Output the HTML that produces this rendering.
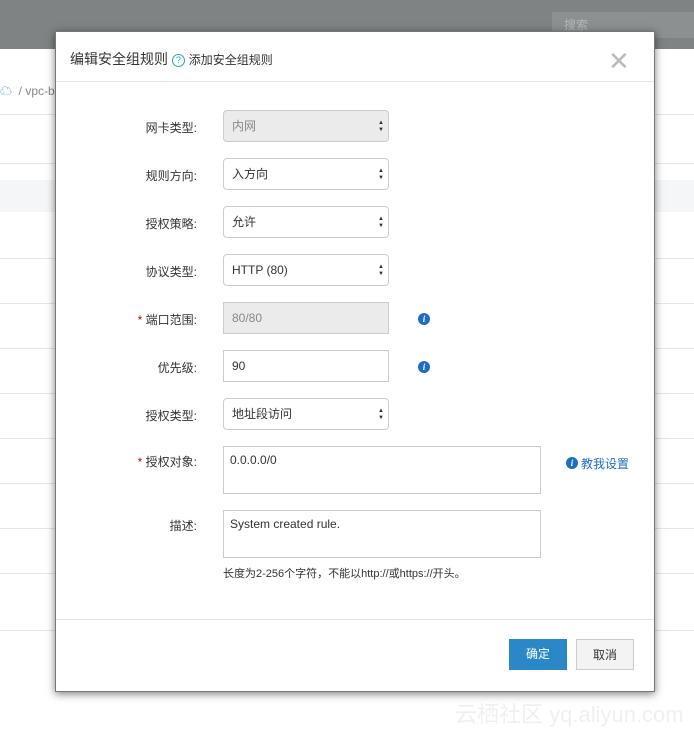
<!DOCTYPE html>
<html><head><meta charset="utf-8"><style>
body{margin:0;width:694px;height:733px;position:relative;overflow:hidden;background:#fff;font-family:"Liberation Sans","Noto Sans CJK SC",sans-serif;}
.top{position:absolute;left:0;top:0;width:694px;height:49px;background:#7f8383}
.search{position:absolute;left:552px;top:12px;width:142px;height:26px;background:#8c9090;color:#b6b9b9;font-size:12px;line-height:26px;padding-left:12px;box-sizing:border-box}
.hl{position:absolute;left:0;width:694px;height:1px;background:#e6e6e6}
.crumb{position:absolute;left:0;top:82px;font-size:12px;color:#888}
.modal{position:absolute;left:55px;top:31px;width:598px;height:659px;background:#fff;border:1px solid #777;box-shadow:0 2px 8px rgba(0,0,0,.5)}
.title{position:absolute;left:14px;top:17px;font-size:14px;color:#333}
.title small{font-size:12px}
.q{display:inline-block;width:11px;height:11px;border:1px solid #2aa;border-radius:50%;font-size:9px;line-height:11px;text-align:center;color:#2aa;vertical-align:1px}
.close{position:absolute;left:552px;top:14px;font-size:26px;color:#bbb;font-weight:300}
.sep{position:absolute;left:0;width:598px;height:1px;background:#e3e3e3}
.lab{position:absolute;width:141px;text-align:right;font-size:12px;color:#333}
.lab b{color:#c00;font-weight:normal}
.in{position:absolute;left:167px;font-size:12px;color:#333;line-height:30px;padding-left:8px;box-sizing:border-box;width:166px;height:32px;border:1px solid #ccc}
.sel{border-radius:4px}
.sel:after{content:"▲\A▼";white-space:pre;position:absolute;right:4px;top:9px;font-size:6px;line-height:7px;color:#333}
.dis{background:#ebebeb;color:#888}
.info{position:absolute;width:12px;height:12px;border-radius:50%;background:#1e6fc4;color:#fff;font-size:9px;font-style:italic;font-weight:bold;text-align:center;line-height:12px;font-family:"Liberation Serif",serif}
.btn{position:absolute;top:607px;height:31px;width:58px;font-size:12px;text-align:center;line-height:31px;box-sizing:border-box}
</style></head><body>
<div class="top"><div class="search">搜索</div></div>
<div class="crumb"><span style="color:#39c">☁</span>&nbsp; / vpc-b</div>
<div class="hl" style="top:114px"></div>
<div class="hl" style="top:163px"></div>
<div class="hl" style="top:180px;height:32px;background:#f4f6f8"></div>
<div class="hl" style="top:258px"></div>
<div class="hl" style="top:303px"></div>
<div class="hl" style="top:348px"></div>
<div class="hl" style="top:393px"></div>
<div class="hl" style="top:438px"></div>
<div class="hl" style="top:483px"></div>
<div class="hl" style="top:528px"></div>
<div class="hl" style="top:573px"></div>
<div class="hl" style="top:630px"></div>
<div style="position:absolute;left:455px;top:697px;font-size:22px;color:#f0f0f0;white-space:nowrap">云栖社区 yq.aliyun.com</div>
<div class="modal">
<div class="title">编辑安全组规则 <span class="q">?</span> <small>添加安全组规则</small></div>
<div class="close">✕</div>
<div class="sep" style="top:49px"></div>
<div class="lab" style="top:87px">网卡类型:</div><div class="in sel dis" style="top:78px">内网</div>
<div class="lab" style="top:135px">规则方向:</div><div class="in sel" style="top:126px">入方向</div>
<div class="lab" style="top:183px">授权策略:</div><div class="in sel" style="top:174px">允许</div>
<div class="lab" style="top:231px">协议类型:</div><div class="in sel" style="top:222px">HTTP (80)</div>
<div class="lab" style="top:279px"><b>*</b> 端口范围:</div><div class="in dis" style="top:270px">80/80</div><div class="info" style="left:362px;top:281px">i</div>
<div class="lab" style="top:327px">优先级:</div><div class="in" style="top:318px">90</div><div class="info" style="left:362px;top:329px">i</div>
<div class="lab" style="top:375px">授权类型:</div><div class="in sel" style="top:366px">地址段访问</div>
<div class="lab" style="top:421px"><b>*</b> 授权对象:</div><div class="in" style="top:414px;width:318px;height:48px;line-height:26px;padding-left:6px">0.0.0.0/0</div>
<div class="info" style="left:510px;top:425px">i</div><div style="position:absolute;left:525px;top:423px;font-size:12px;color:#1e6fc4">教我设置</div>
<div class="lab" style="top:485px">描述:</div><div class="in" style="top:478px;width:318px;height:48px;line-height:26px;padding-left:6px">System created rule.</div>
<div style="position:absolute;left:167px;top:533px;font-size:11px;color:#333">长度为2-256个字符，不能以http://或https://开头。</div>
<div class="sep" style="top:587px"></div>
<div class="btn" style="left:453px;background:#2a88c8;color:#fff">确定</div>
<div class="btn" style="left:520px;background:#f3f3f3;border:1px solid #ccc;color:#333">取消</div>
</div>
</body></html>
